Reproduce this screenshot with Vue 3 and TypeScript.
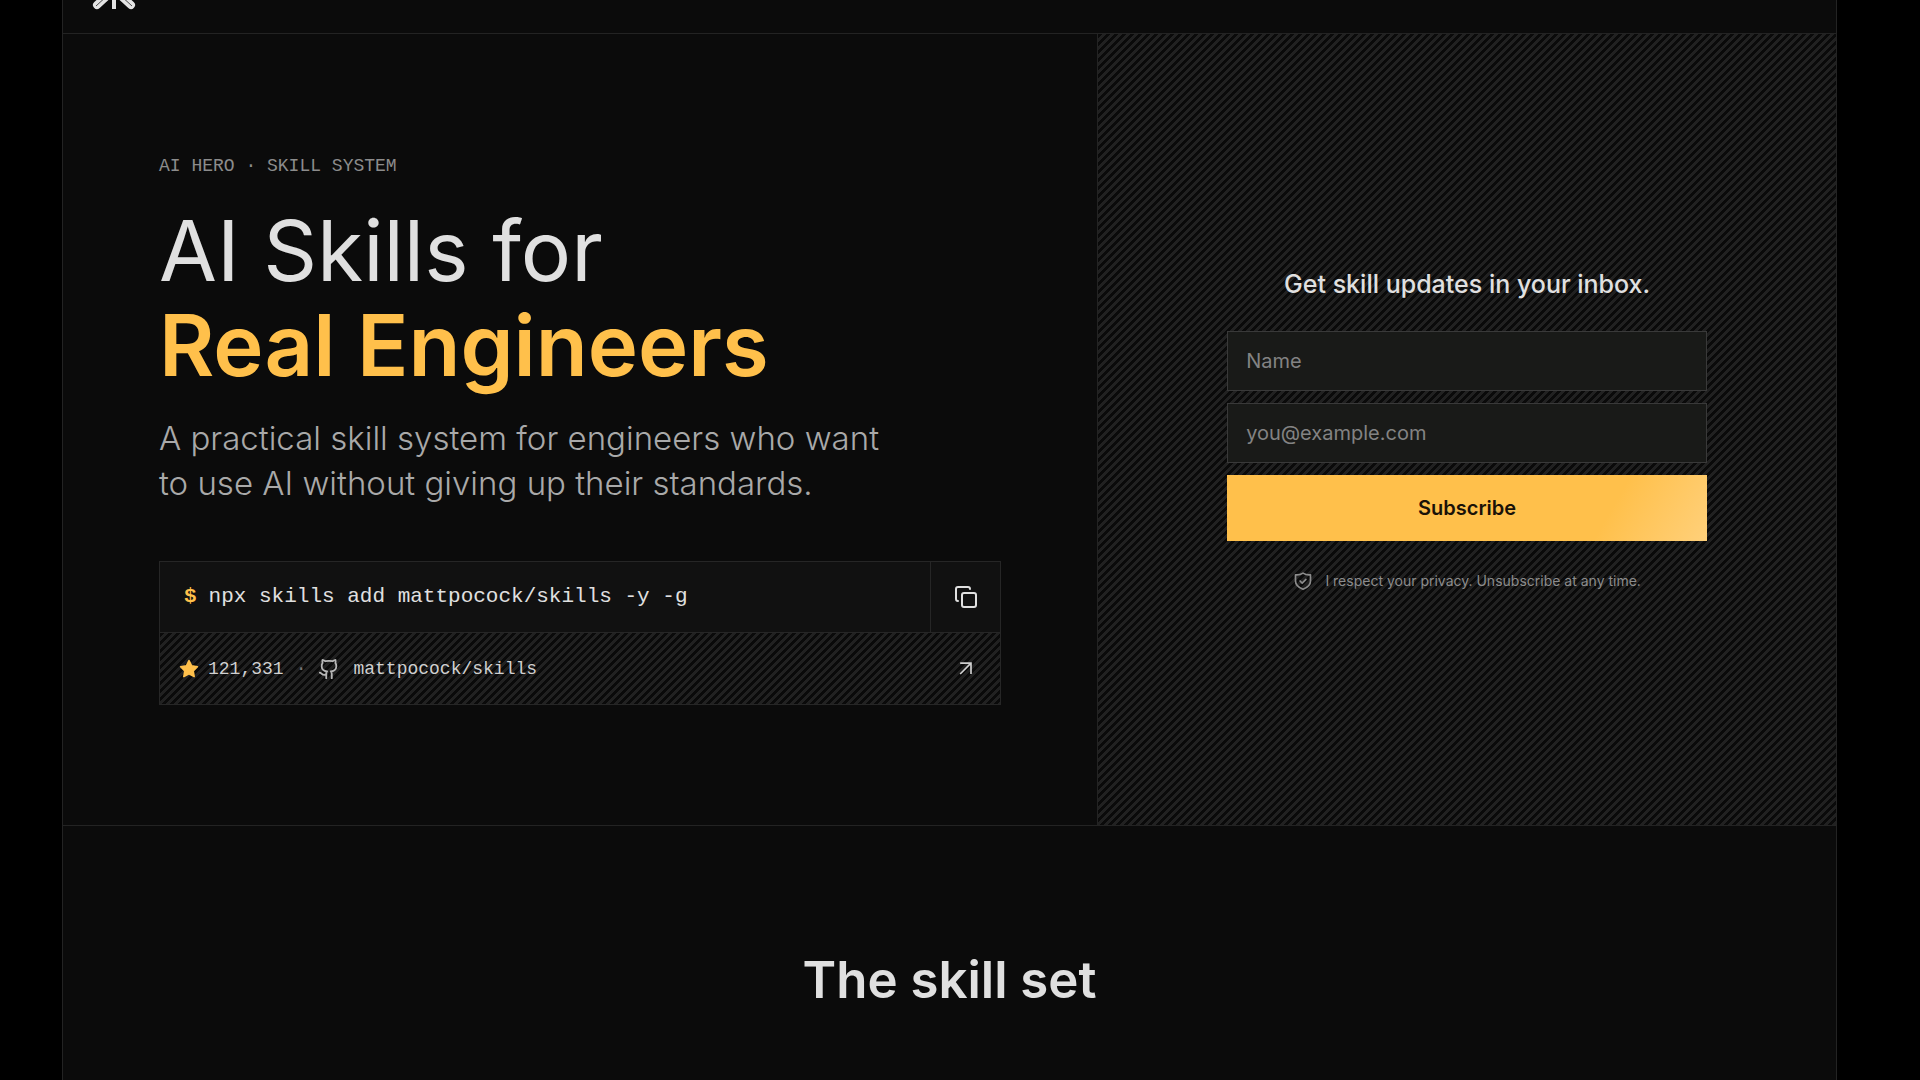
<script setup lang="ts">
import { ref } from 'vue'

const command = 'npx skills add mattpocock/skills -y -g'
const name = ref('')
const email = ref('')

function copyCommand(): void {
  void navigator.clipboard?.writeText(command)
}
</script>

<template>
  <div class="page">
    <div class="frame">
      <header class="header">
        <a class="logo" href="#" aria-label="AI Hero">
          <svg width="44" height="10" viewBox="0 0 44 10" fill="none">
            <path d="M16 -5L5 5M28 -5L39 5" stroke="#e4e4e4" stroke-width="8" stroke-linecap="round" />
            <path d="M16 -5L4 6M28 -5L40 6" stroke="#4a4a4a" stroke-width="1" />
            <path d="M22 0V9" stroke="#e4e4e4" stroke-width="4" />
          </svg>
        </a>
      </header>

      <main>
        <section class="hero">
          <div class="intro">
            <p class="eyebrow">AI HERO · SKILL SYSTEM</p>
            <h1 class="title">AI Skills for<br /><strong>Real Engineers</strong></h1>
            <p class="lead">A practical skill system for engineers who want<br />to use AI without giving up their standards.</p>

            <div class="terminal">
              <div class="command">
                <code class="code"><span class="prompt">$</span>{{ command }}</code>
                <button class="copy" type="button" aria-label="Copy command" @click="copyCommand">
                  <svg width="24" height="24" viewBox="0 0 24 24" fill="none" stroke="currentColor" stroke-width="2" stroke-linecap="round" stroke-linejoin="round">
                    <rect x="8" y="8" width="14" height="14" rx="2" />
                    <path d="M4 16c-1.1 0-2-.9-2-2V4c0-1.1.9-2 2-2h10c1.1 0 2 .9 2 2" />
                  </svg>
                </button>
              </div>
              <a class="repo stripes" href="#">
                <svg class="star" width="20" height="20" viewBox="0 0 24 24" fill="currentColor" stroke="currentColor" stroke-width="2" stroke-linejoin="round">
                  <path d="M12 2l3.09 6.26L22 9.27l-5 4.87 1.18 6.88L12 17.77l-6.18 3.25L7 14.14 2 9.27l6.91-1.01z" />
                </svg>
                <span class="count">121,331</span>
                <span class="dot">·</span>
                <svg class="github" width="22" height="22" viewBox="0 0 24 24" fill="none" stroke="currentColor" stroke-width="2" stroke-linecap="round" stroke-linejoin="round">
                  <path d="M15 22v-4a4.8 4.8 0 0 0-1-3.5c3 0 6-2 6-5.5.08-1.25-.27-2.48-1-3.5.28-1.15.28-2.35 0-3.5 0 0-1 0-3 1.5-2.64-.5-5.36-.5-8 0C6 2 5 2 5 2c-.3 1.15-.3 2.35 0 3.5A5.4 5.4 0 0 0 4 9c0 3.5 3 5.5 6 5.5-.39.49-.68 1.05-.85 1.65S8.93 17.38 9 18v4" />
                  <path d="M9 18c-4.51 2-5-2-7-2" />
                </svg>
                <span class="name">mattpocock/skills</span>
                <svg class="arrow" width="20" height="20" viewBox="0 0 24 24" fill="none" stroke="currentColor" stroke-width="2">
                  <path d="M5 5h13v13M18 5L5 18" />
                </svg>
              </a>
            </div>
          </div>

          <aside class="signup stripes">
            <form class="form" @submit.prevent>
              <h2 class="form-title">Get skill updates in your inbox.</h2>
              <input v-model="name" class="field" type="text" placeholder="Name" aria-label="Name" />
              <input v-model="email" class="field" type="email" placeholder="you@example.com" aria-label="Email" />
              <button class="subscribe" type="submit">Subscribe</button>
              <p class="privacy">
                <svg width="20" height="20" viewBox="0 0 24 24" fill="none" stroke="currentColor" stroke-width="2" stroke-linecap="round" stroke-linejoin="round">
                  <path d="M3 4.5Q8 5 12 2.5Q16 5 21 4.5V12C21 17 17 20 12 22C7 20 3 17 3 12Z" />
                  <path d="M8.5 12l2.5 2.5 4.5-4.5" />
                </svg>
                <span>I respect your privacy. Unsubscribe at any time.</span>
              </p>
            </form>
          </aside>
        </section>

        <section class="skills">
          <h2 class="skills-title">The skill set</h2>
        </section>
      </main>
    </div>
  </div>
</template>

<style>
body {
  margin: 0;
  background: #000;
}
</style>

<style scoped>
.page {
  box-sizing: border-box;
  min-height: 100vh;
  padding: 0 83px 0 62px;
  display: flex;
  background: #000;
  color: #e0e0e0;
  font-family: Inter, "Liberation Sans", sans-serif;
}

.page *,
.page *::before {
  box-sizing: border-box;
}

.frame {
  flex: 1;
  min-width: 0;
  border: solid #232323;
  border-width: 0 1px;
  background: #0b0b0b;
}

h1,
h2,
p {
  margin: 0;
}

.header {
  height: 34px;
  padding-left: 29px;
  border-bottom: 1px solid #232323;
}

.logo,
.logo svg {
  display: block;
  width: 44px;
}

.stripes {
  background: linear-gradient(135deg, #0a0a0a 25%, #212121 25% 50%, #0a0a0a 50% 75%, #212121 75%) 0 0 / 8px 8px;
}

.hero {
  display: grid;
  grid-template-columns: 7fr 5fr;
  min-height: 792px;
  border-bottom: 1px solid #232323;
}

.intro {
  padding: 2px 96px 0;
  display: flex;
  flex-direction: column;
  justify-content: center;
}

.eyebrow {
  color: #8c8c8c;
  font: 18px/20px "Liberation Mono", monospace;
}

.title {
  margin-top: 27px;
  font-size: 84px;
  line-height: 95px;
  font-weight: 400;
}

.title strong {
  color: #ffc04b;
  font-size: 85px;
  font-weight: 600;
}

.lead {
  margin-top: 23px;
  color: #a9a9a9;
  font-size: 33px;
  line-height: 45px;
  font-weight: 300;
  white-space: nowrap;
}

.terminal {
  margin-top: 55px;
  border: 1px solid #262626;
  font-family: "Liberation Mono", monospace;
}

.command {
  height: 71px;
  display: flex;
  border-bottom: 1px solid #262626;
  background: #111;
}

.code {
  flex: 1;
  display: flex;
  align-items: center;
  gap: 12px;
  padding-left: 24px;
  font: 21px/28px "Liberation Mono", monospace;
}

.prompt {
  color: #ffc04b;
  font-weight: 700;
}

.copy {
  width: 70px;
  padding: 0;
  display: flex;
  align-items: center;
  justify-content: center;
  border: 0;
  border-left: 1px solid #262626;
  background: transparent;
  color: #e0e0e0;
}

.repo {
  height: 71px;
  padding: 0 24px 0 19px;
  display: flex;
  align-items: center;
  color: #d0d0d0;
  font-size: 18px;
  text-decoration: none;
}

.star {
  margin-right: 9px;
  color: #ffc04b;
}

.dot {
  margin: 0 12px;
  color: #777;
}

.github {
  margin-right: 13px;
  color: #b8b8b8;
}

.arrow {
  margin-left: auto;
}

.signup {
  padding: 0 24px;
  display: flex;
  align-items: center;
  justify-content: center;
  border-left: 1px solid #232323;
}

.form {
  width: 100%;
  max-width: 480px;
  display: flex;
  flex-direction: column;
  gap: 12px;
}

.form-title {
  margin-bottom: 19px;
  font-size: 25px;
  line-height: 32px;
  font-weight: 500;
  text-align: center;
}

.field {
  width: 100%;
  height: 60px;
  padding: 0 18px;
  border: 1px solid #393939;
  border-radius: 0;
  background: #191a18;
  color: #e0e0e0;
  font: 20px/28px Inter, "Liberation Sans", sans-serif;
}

.field::placeholder {
  color: #838383;
  opacity: 1;
}

.subscribe {
  height: 66px;
  border: 0;
  background: linear-gradient(120deg, #ffc04b 78%, #ffd07a 100%);
  color: #1a1208;
  font: 600 20px/28px Inter, "Liberation Sans", sans-serif;
}

.privacy {
  margin-top: 18px;
  display: flex;
  align-items: center;
  justify-content: center;
  gap: 12px;
  color: #8c8c8c;
  font-size: 14px;
  line-height: 20px;
}

.skills {
  padding: 120px 24px;
}

.skills-title {
  font-size: 51px;
  line-height: 68px;
  font-weight: 600;
  text-align: center;
}
</style>
